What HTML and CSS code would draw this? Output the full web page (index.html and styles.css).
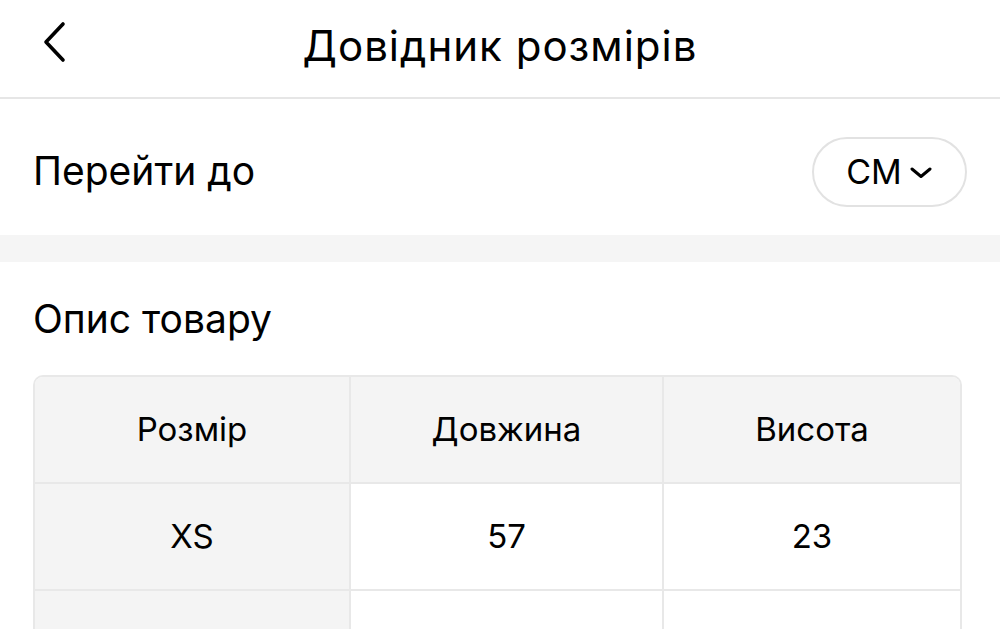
FILE: index.html
```html
<!DOCTYPE html>
<html lang="uk">
<head>
    <meta charset="UTF-8">
    <meta name="viewport" content="width=device-width, initial-scale=1.0">
    <title>Довідник розмірів</title>
    <link rel="stylesheet" href="styles.css">
</head>
<body>
    <header class="topbar">
        <button class="back-button" aria-label="Назад">
            <svg width="24" height="42" viewBox="0 0 24 42">
                <path d="M21 3 L4 21 L21 39" fill="none" stroke="#000" stroke-width="3.6" stroke-linecap="round" stroke-linejoin="round"/>
            </svg>
        </button>
        <h1 class="title">Довідник розмірів</h1>
    </header>

    <section class="jump-row">
        <span class="jump-label">Перейти до</span>
        <button class="unit-pill">
            <span>СМ</span>
            <svg width="24" height="12" viewBox="0 0 24 12">
                <path d="M3 2 L12 9.5 L21 2" fill="none" stroke="#000" stroke-width="3" stroke-linecap="round" stroke-linejoin="round"/>
            </svg>
        </button>
    </section>

    <div class="spacer"></div>

    <section class="product">
        <h2 class="section-title">Опис товару</h2>
        <div class="size-table">
            <div class="cell head">Розмір</div>
            <div class="cell head">Довжина</div>
            <div class="cell head">Висота</div>

            <div class="cell first">XS</div>
            <div class="cell">57</div>
            <div class="cell">23</div>

            <!-- next row starts below the fold -->
            <div class="cell first"></div>
            <div class="cell"></div>
            <div class="cell"></div>
        </div>
    </section>
</body>
</html>
```

FILE: styles.css
```css
body {
    margin: 0;
    font-family: Inter, "Liberation Sans", Arial, sans-serif;
    color: #000;
    background-color: #fff;
    height: 629px;
    overflow: hidden;
}
.topbar {
    position: relative;
    height: 97px;
    border-bottom: 2px solid #e6e6e6;
    display: flex;
    align-items: center;
    justify-content: center;
}
.back-button {
    position: absolute;
    left: 42px;
    top: 21px;
    padding: 0;
    border: none;
    background: none;
}
.title {
    margin: 0;
    font-size: 42px;
    font-weight: 400;
    letter-spacing: 1px;
    padding-bottom: 6px;
}
.jump-row {
    box-sizing: border-box;
    height: 136px;
    padding: 10px 33px 0;
    display: flex;
    align-items: center;
    justify-content: space-between;
}
.jump-label {
    font-size: 39px;
    padding-bottom: 4px;
}
.unit-pill {
    height: 70px;
    width: 155px;
    border: 2px solid #e2e2e2;
    border-radius: 35px;
    background: #fff;
    display: flex;
    align-items: center;
    justify-content: center;
    gap: 7px;
    font-family: inherit;
    font-size: 34px;
    color: #000;
    padding: 0 0 2px 0;
}
.unit-pill svg {
    margin-top: 4px;
}
.spacer {
    height: 27px;
    background-color: #f5f5f5;
}
.product {
    padding: 0 38px 0 33px;
}
.section-title {
    margin: 0;
    height: 113px;
    display: flex;
    align-items: center;
    font-size: 39px;
    font-weight: normal;
}
.size-table {
    display: grid;
    grid-template-columns: 316px 313px 1fr;
    grid-auto-rows: 107px;
    border: 2px solid #e8e8e8;
    border-bottom: none;
    border-radius: 10px 10px 0 0;
    overflow: hidden;
}
.cell {
    display: flex;
    align-items: center;
    justify-content: center;
    font-size: 33px;
    border-right: 2px solid #e8e8e8;
    border-bottom: 2px solid #e8e8e8;
    padding-bottom: 2px;
}
.cell:nth-child(3n) {
    border-right: none;
}
.cell.head,
.cell.first {
    background-color: #f4f4f4;
}
```
